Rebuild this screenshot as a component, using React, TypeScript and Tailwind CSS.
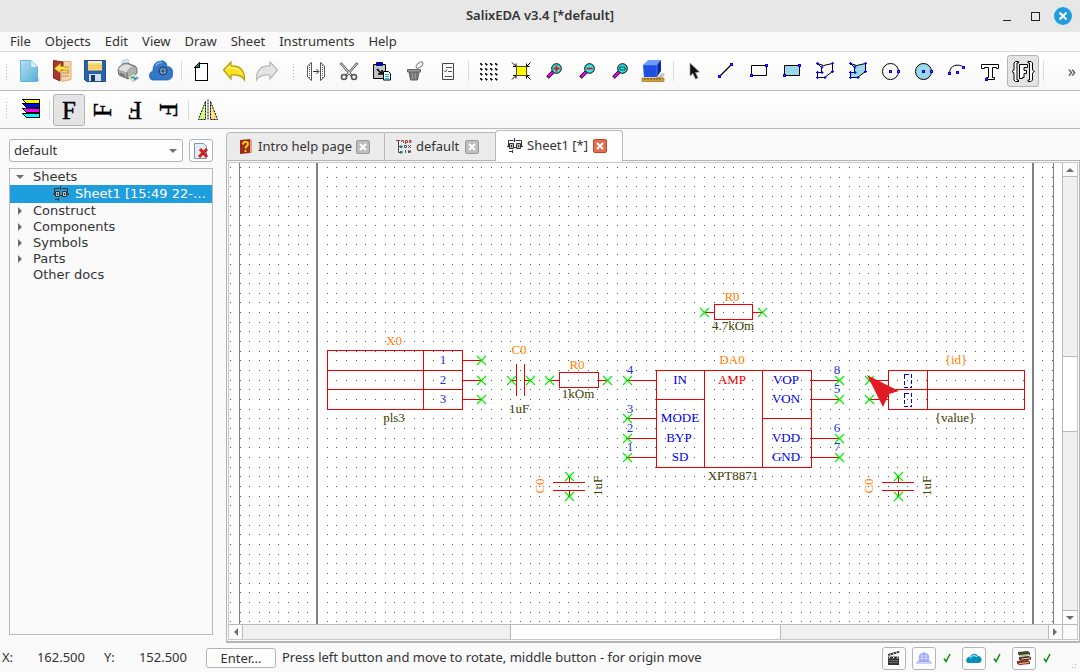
import React from "react";

type IconProps = { children: React.ReactNode; crisp?: boolean };

const Icon = ({ children, crisp }: IconProps) => (
  <svg
    width="24"
    height="24"
    viewBox="0 0 24 24"
    fill="none"
    shapeRendering={crisp ? "crispEdges" : "auto"}
    aria-hidden="true"
  >
    {children}
  </svg>
);

const Node = ({ x, y }: { x: number; y: number }) => (
  <g>
    <rect x={x - 1.5} y={y - 1.5} width="3" height="3" fill="#0000ff" />
    <rect x={x - 0.5} y={y - 0.5} width="1" height="1" fill="#c02080" />
  </g>
);

const Letter = ({ angle }: { angle: number }) => (
  <Icon>
    <text
      x="12"
      y="20.5"
      fontSize="25"
      textAnchor="middle"
      fontFamily="Liberation Serif, serif"
      fill="#000"
      stroke="#000"
      strokeWidth="0.4"
      transform={`rotate(${angle} 12 12)`}
    >
      F
    </text>
  </Icon>
);

const Magnifier = ({ children }: { children: React.ReactNode }) => (
  <Icon>
    <path d="M11 13 5.5 18.5" stroke="#000" strokeWidth="3.6" />
    <path d="M11 13 6 18" stroke="#f0f" strokeWidth="2" />
    <circle cx="14.5" cy="9.5" r="4.8" fill="#2ee6e6" stroke="#000" />
    {children}
  </Icon>
);

const POLY = "M4.5 4.5 8.5 8.5V13.5H4.5V18.5H11.5L19.5 12.5V4.5L10.5 6.5Z";
const POLY_NODES = [
  [4.5, 4.5],
  [9, 8],
  [9, 13.5],
  [4.5, 13.5],
  [4.5, 18.5],
  [12, 18.5],
  [19.5, 12.5],
  [19.5, 4.5],
];

const Polygon = ({ fill }: { fill: string }) => (
  <Icon>
    <path d={POLY} fill={fill} stroke="#000" />
    {POLY_NODES.map(([x, y]) => (
      <path
        key={`${x}-${y}`}
        d={`M${x - 1.5} ${y}h3M${x} ${y - 1.5}v3`}
        stroke="#0000ff"
        strokeWidth="1.2"
      />
    ))}
  </Icon>
);

const icons = {
  create: (
    <Icon>
      <defs>
        <linearGradient id="page" x1="0" y1="0" x2="1" y2="1">
          <stop offset="0" stopColor="#b5e0f3" />
          <stop offset="1" stopColor="#55aed6" />
        </linearGradient>
      </defs>
      <path d="M17 22h6l-2-4z" fill="#c9d2d6" />
      <path d="M3.500 1.500H14L20.500 8v14.500H3.500z" fill="url(#page)" stroke="#69b4d6" />
      <path d="M14 1.500V8h6.500z" fill="#e3f4fb" stroke="#8cc7e0" strokeWidth=".6" />
    </Icon>
  ),
  open: (
    <Icon>
      <path d="M10 2.500h11v18l-9 2z" fill="#f5d5a4" stroke="#d7b07b" />
      <path d="M12 8h7M12 11h7M12 14h7M12 17h7" stroke="#d08b4e" />
      <path d="M3.500 1.500 13 3v8h-3v11l-6.500-3z" fill="#a83a32" stroke="#86231f" />
      <path d="m4.500 9.500 6-5v3c5-.5 8 2 8 6-2-2.500-4-3-8-2.500v3z" fill="#ffe84a" stroke="#c79a14" strokeWidth=".7" />
    </Icon>
  ),
  save: (
    <Icon>
      <path d="M1.500 1.500h21v21h-19l-2-2z" fill="#2763a8" stroke="#244f86" />
      <path d="M5 2h14v9.500H5z" fill="#ffdc78" />
      <path d="M5 2h14v2H5z" fill="#f5f0d6" />
      <path d="M5 6.500h14M5 9h14" stroke="#eebf4d" />
      <path d="M6 15h12v7H6z" fill="#cfe0ea" />
      <path d="M8 16h4v6H8z" fill="#193c67" />
    </Icon>
  ),
  print: (
    <Icon>
      <path d="m6 2 6-2 1 6-6 3z" fill="#d9eaf8" stroke="#96b6d2" strokeWidth=".7" />
      <path d="M2 11C3 7 7 4 11 4l8 3c2 1 2 3 2 7l-9 6-9-4z" fill="#b0b0b0" stroke="#6e6e6e" />
      <path d="M2 11c2-4 5-6 9-6l8 3c-4 0-7 2-8 6z" fill="#dedede" stroke="#898989" strokeWidth=".6" />
      <path d="M11 14v6" stroke="#606060" />
      <path d="m4 13.500 5 2.500v3l-5-2.500z" fill="#777" />
      <path d="m12 18 6-3 5 4-6 4z" fill="#e8efe9" stroke="#9aaeb0" strokeWidth=".6" />
      <path d="m14 18 4-1 1 2-3 1z" fill="#59b044" />
      <path d="m18 19 3-1 1 1-4 3z" fill="#487ed8" />
    </Icon>
  ),
  cloud: (
    <Icon>
      <path
        d="M3 21C-1 19 0 13 4 12 4 6 7 2 11 2.500c3-2 7 1 7 5 4 0 6 3 5.500 6C24 18 22 21 18 21z"
        fill="#3478c9"
        stroke="#235ea8"
        strokeWidth=".8"
      />
      <path d="M7 7c1-3 4-4 6-3" stroke="#79ace5" strokeWidth="1.500" />
      <circle cx="14" cy="12" r="3.800" stroke="#2b4a6e" strokeWidth="1.600" fill="#86aed8" />
      <circle cx="14" cy="12" r="1.400" fill="#1a3352" />
      <path d="M14 9v6M11 12h6" stroke="#3d648f" strokeWidth=".8" />
    </Icon>
  ),
  sheet: (
    <Icon crisp>
      <path d="M10 4h8v17H6V8z" fill="#fff" stroke="#000" />
      <path d="m6 8 4-4v4z" fill="#008080" stroke="#000" />
    </Icon>
  ),
  undo: (
    <Icon>
      <path
        d="M1.500 11 9 3v4c8-.5 14 3 13.500 14-2.500-4.500-7-5.500-13.500-5v4z"
        fill="#f8e11d"
        stroke="#b99a0b"
        strokeWidth="1.200"
      />
      <path d="m4 11 4-4v2c6 0 10 2 12 6" stroke="#fff7a3" />
    </Icon>
  ),
  redo: (
    <Icon>
      <path
        d="M22.500 11 15 3v4C7 6.500 1 10 1.500 21 4 16.500 8.500 15.500 15 16v4z"
        fill="#e4e4e4"
        stroke="#b8b8b8"
        strokeWidth="1.200"
      />
    </Icon>
  ),
  mirrorGap: (
    <Icon>
      <path
        d="M7.500 3.500v18M7.500 3.500 3.500 7v11l4 3.500M16.500 3.500v18M16.500 3.500l4 3.500v11l-4 3.500"
        stroke="#555"
      />
      <path d="M5.500 6v13M18.500 6v13" stroke="#666" strokeDasharray="1 1" />
      <path d="M9 12.500h5.500M12.500 10l2.500 2.500-2.500 2.500" stroke="#333" />
    </Icon>
  ),
  cut: (
    <Icon>
      <path d="M3.500 4 15 17M20.500 4 9 17" stroke="#555" strokeWidth="2.600" />
      <path d="M4 4.500 14 16M20 4.500 10 16" stroke="#f4f4f4" strokeWidth="1" />
      <circle cx="7" cy="18" r="2.500" stroke="#555" strokeWidth="1.600" />
      <circle cx="17" cy="18" r="2.500" stroke="#555" strokeWidth="1.600" />
    </Icon>
  ),
  paste: (
    <Icon>
      <path d="M3.500 5.500h12v14h-12z" fill="#c4c4c4" stroke="#000" />
      <path d="M6.500 3.500h6v3h-6z" fill="#00009a" stroke="#00009a" />
      <path d="m7 10 5 5m0-4v4H8" stroke="#000" strokeWidth="1.600" />
      <path d="M13.500 12.500h5l2 2v6.500h-7z" fill="#fff" stroke="#000" />
      <path d="M15 15.500h4M15 17.500h4M15 19.500h4" stroke="#00c8d8" />
    </Icon>
  ),
  trash: (
    <Icon>
      <path d="m6 13 1.500 8h7l1.500-8z" fill="#777" stroke="#666" />
      <path d="M4.500 10.500h13v2.500h-13z" fill="#999" stroke="#666" />
      <ellipse cx="16.500" cy="6" rx="4" ry="2" stroke="#777" transform="rotate(-40 16.500 6)" />
      <path d="M9.500 14v6M12.500 14v6" stroke="#999" />
    </Icon>
  ),
  checklist: (
    <Icon>
      <path d="M6.500 4.500h11v16h-11z" stroke="#444" />
      <path d="M10 8.500h6M12 12.500h4M9 17.500h7M8 11.500l1.500 1.500 1.500-2.500" stroke="#555" />
    </Icon>
  ),
  grid: (
    <Icon crisp>
      {[4, 9, 14, 19].map((y) =>
        [4, 9, 14, 19].map((x) => (
          <path key={`${x}-${y}`} d={`M${x} ${y}h1v1h1v1h-1v-1h-1z`} fill="#000" stroke="#000" strokeWidth=".6" />
        )),
      )}
    </Icon>
  ),
  fit: (
    <Icon>
      <path
        d="M3 3.500l4 4m0-3v3H4M21.500 3.500l-4 4m0-3v3h3M3 20.500l4-4m0 3v-3H4M21.500 20.500l-4-4m0 3v-3h3"
        stroke="#000"
      />
      <path d="M7.500 7.500h10v9h-10z" fill="#ff0" stroke="#5a4500" />
    </Icon>
  ),
  zoomIn: (
    <Magnifier>
      <path d="M11.500 9.500h6M14.500 6.500v6" stroke="#f00" strokeWidth="1.600" />
    </Magnifier>
  ),
  zoomOut: (
    <Magnifier>
      <path d="M11.500 9.500h6" stroke="#f00" strokeWidth="1.600" />
    </Magnifier>
  ),
  zoomFit: (
    <Magnifier>
      <path d="M12 8h5v3h-5z" stroke="#004848" />
    </Magnifier>
  ),
  cube: (
    <Icon>
      <path d="m18 17 3-3 3 1-3 4h-6z" fill="#9a9a9a" opacity=".6" />
      <path d="m2 6 5-5h13l-3 5z" fill="#6f9cff" />
      <path d="M2 6h14v12H3z" fill="#1f4fe0" />
      <path d="m16 6 4-5v11l-4 6z" fill="#0a2aa5" />
      <path d="M2 6h14v12" stroke="#6d97f6" strokeWidth=".6" />
      <path d="M1 19h22v3.500H1z" fill="#d8a030" stroke="#8a6310" strokeWidth=".6" />
      <path d="M4 19v2M7 19v2M10 19v2M13 19v2M16 19v2M19 19v2" stroke="#5c4006" strokeWidth=".8" />
    </Icon>
  ),
  pointer: (
    <Icon>
      <path d="m9 4 9.500 9-4 .5 2.500 5.500-2.500 1-2.500-5.500L9 17z" fill="#111" stroke="#999" strokeWidth=".7" />
    </Icon>
  ),
  line: (
    <Icon>
      <path d="m5.500 17.500 12-12" stroke="#000" strokeWidth="1.200" />
      <Node x={5.5} y={17.5} />
      <Node x={17.5} y={5.5} />
    </Icon>
  ),
  rect: (
    <Icon>
      <path d="M4.500 6.500h15v10h-15z" stroke="#000" />
      <Node x={4.5} y={16.5} />
      <Node x={19.5} y={6.5} />
    </Icon>
  ),
  rectFill: (
    <Icon>
      <path d="M4.500 6.500h15v10h-15z" fill="#99d9ea" stroke="#000" />
      <Node x={4.5} y={16.5} />
      <Node x={19.5} y={6.5} />
    </Icon>
  ),
  poly: <Polygon fill="none" />,
  polyFill: <Polygon fill="#99d9ea" />,
  circle: (
    <Icon>
      <circle cx="11.500" cy="12.500" r="8" stroke="#000" />
      <Node x={11.5} y={12.5} />
      <Node x={19.5} y={12.5} />
    </Icon>
  ),
  circleFill: (
    <Icon>
      <circle cx="11.500" cy="12.500" r="8" fill="#99d9ea" stroke="#000" />
      <Node x={11.5} y={12.5} />
      <Node x={19.5} y={12.5} />
    </Icon>
  ),
  arc: (
    <Icon>
      <path d="M4.500 14.500c0-9 9-10 14-6.500" stroke="#000" />
      <Node x={4.5} y={14.5} />
      <Node x={12.5} y={13.5} />
      <Node x={18.5} y={8.5} />
    </Icon>
  ),
  text: (
    <Icon>
      <path d="M3.500 5.500h17v4h-2v-1h-4v10h2v2h-8v-2h2v-10h-4v1h-3z" fill="#fff" stroke="#000" />
      <Node x={8.5} y={20.5} />
    </Icon>
  ),
  param: (
    <Icon>
      <path
        d="M7.500 2.500h-3l-1.500 1.500v7L1 12.500 3 14v7l1.500 1.500h3v-1.500H6v-17h1.500zM17 2.500h3l1.500 1.500v7l2 1.500-2 1.500v7L20 22.500h-3v-1.500h1.500v-17H17z"
        fill="#fff"
        stroke="#000"
      />
      <path d="M8.500 5.500h8v3h-3.500v3h2.500v3H13v4h-1.500v1h-3z" fill="#fff" stroke="#000" />
    </Icon>
  ),
  layers: (
    <Icon crisp>
      {[
        ["#ff0", 0],
        ["#00f", 4],
        ["#f0f", 9],
        ["#0ff", 14],
      ].map(([color, y]) => (
        <path
          key={color}
          d={`M5 ${Number(y) + 1}H22V${Number(y) + 5}H9Z`}
          fill={String(color)}
          stroke="#000"
        />
      ))}
    </Icon>
  ),
  flip: (
    <Icon>
      <path d="M9.500 3.500V21.500h-7z" fill="#d5fb7c" stroke="#000" strokeDasharray="2 1" />
      <path d="M14.500 3.500V21.500h7z" fill="#ffe27e" stroke="#000" strokeDasharray="2 1" />
      <path d="M12 1.500v21" stroke="#000" strokeDasharray="2 1" />
    </Icon>
  ),
};

const SchemeIcon = () => (
  <svg width="16" height="16" viewBox="0 0 16 16" fill="none" stroke="#333" aria-hidden="true">
    <path d="M1.500 9V2.500H6.500M8.500 2.500h6V9M7.500 0v4M6 9.500h4M2 13.500h4M5.500 12v3" />
    <path d="M2.500 5.500h4v5h-4zM9.500 5.500h4v5h-4z" fill="#bbb" />
    <path d="M0 8.500h2M14 8.500h2M4.500 7v2M11.500 7v2" />
  </svg>
);

const BookIcon = () => (
  <svg width="16" height="16" viewBox="0 0 16 16" aria-hidden="true">
    <path d="M2 1 12 0v14L2 15z" fill="#9f2a20" />
    <path d="M12 0l2 1v13l-2 0z" fill="#d9a58c" />
    <path d="M5 5.500C5 2 10 2 10 5c0 2-2.500 2-2.500 4.500M7.500 11v2" stroke="#ffe000" strokeWidth="1.800" fill="none" />
  </svg>
);

const TreeIcon = () => (
  <svg width="16" height="16" viewBox="0 0 16 16" fill="none" aria-hidden="true">
    <path d="M2.500 2v11.500H6M2.500 7.500H6" stroke="#444" />
    <path d="M0 1.500h4M5.500 3V1.500h2V4M9.500 5V1.500h2v2h-2M13.500 1.500h1.500v2h-1.500z" stroke="#a33b3b" />
    <path d="M8.500 6.500h2v2h-2zM12 6l3 3m0-3-3 3M9.500 11v3M12.500 14v-2.500h1v2h1v-2" stroke="#555" />
    <path d="M4 6.500h2.500v2.500H4zM4 12h2.500v2.500H4z" fill="#178080" />
  </svg>
);

type Tool = { icon: React.ReactNode; label: string; active?: boolean } | null;

const fileTools: Tool[] = [
  { icon: icons.create, label: "New" },
  { icon: icons.open, label: "Open" },
  { icon: icons.save, label: "Save" },
  { icon: icons.print, label: "Print" },
  { icon: icons.cloud, label: "Cloud" },
  null,
  { icon: icons.sheet, label: "Sheet" },
  { icon: icons.undo, label: "Undo" },
  { icon: icons.redo, label: "Redo" },
];

const drawTools: Tool[] = [
  { icon: icons.mirrorGap, label: "Move" },
  { icon: icons.cut, label: "Cut" },
  { icon: icons.paste, label: "Paste" },
  { icon: icons.trash, label: "Delete" },
  { icon: icons.checklist, label: "Properties" },
  null,
  { icon: icons.grid, label: "Grid" },
  { icon: icons.fit, label: "Fit" },
  { icon: icons.zoomIn, label: "Zoom in" },
  { icon: icons.zoomOut, label: "Zoom out" },
  { icon: icons.zoomFit, label: "Zoom window" },
  { icon: icons.cube, label: "3D view" },
  null,
  { icon: icons.pointer, label: "Select" },
  { icon: icons.line, label: "Line" },
  { icon: icons.rect, label: "Rectangle" },
  { icon: icons.rectFill, label: "Filled rectangle" },
  { icon: icons.poly, label: "Polygon" },
  { icon: icons.polyFill, label: "Filled polygon" },
  { icon: icons.circle, label: "Circle" },
  { icon: icons.circleFill, label: "Filled circle" },
  { icon: icons.arc, label: "Arc" },
  { icon: icons.text, label: "Text" },
  { icon: icons.param, label: "Parameter text", active: true },
  null,
];

const textTools: Tool[] = [
  { icon: icons.layers, label: "Layers" },
  null,
  { icon: <Letter angle={0} />, label: "Text 0", active: true },
  { icon: <Letter angle={-90} />, label: "Text 90" },
  { icon: <Letter angle={180} />, label: "Text 180" },
  { icon: <Letter angle={90} />, label: "Text 270" },
  null,
  { icon: icons.flip, label: "Mirror" },
];

const Toolbar = ({ tools }: { tools: Tool[] }) => (
  <div className="flex shrink-0 items-center gap-px pl-[5px] pr-1">
    <div className="mr-[3px] h-[17px] w-1 bg-[radial-gradient(#b4b4b4_1px,transparent_1px)] bg-[length:3px_3px]" />
    {tools.map((tool, i) =>
      tool ? (
        <button
          key={tool.label}
          aria-label={tool.label}
          className={
            tool.active
              ? "flex size-8 items-center justify-center rounded-[3px] border border-[#b4b4b4] bg-[#e4e4e4]"
              : "flex size-8 items-center justify-center"
          }
        >
          {tool.icon}
        </button>
      ) : (
        <div key={i} className="flex h-5 w-1.5 justify-center">
          <div className="w-px bg-[#dcdcdc]" />
        </div>
      ),
    )}
  </div>
);

const menus = ["File", "Objects", "Edit", "View", "Draw", "Sheet", "Instruments", "Help"];

const TitleBar = () => (
  <header className="grid h-8 shrink-0 grid-cols-[1fr_auto_1fr] items-center bg-[#e7e7e7]">
    <h1 className="col-start-2 text-[13px] font-semibold text-[#333]">SalixEDA v3.4 [*default]</h1>
    <div className="flex items-center justify-end gap-[18px] pr-2">
      <button aria-label="Minimize" className="flex size-[10px] items-end">
        <span className="h-px w-2 bg-[#222]" />
      </button>
      <button aria-label="Maximize" className="size-[9px] border border-[#222]" />
      <button aria-label="Close" className="-ml-1 flex size-[18px] items-center justify-center rounded-full bg-[#1f9ede]">
        <svg width="8" height="8" viewBox="0 0 8 8" stroke="#fff" strokeWidth="2">
          <path d="m.5.5 7 7m0-7-7 7" />
        </svg>
      </button>
    </div>
  </header>
);

const Arrow = ({ dir }: { dir: "up" | "down" | "left" | "right" }) => {
  const d = {
    up: "M0 6h8L4 2z",
    down: "M0 2h8L4 6z",
    left: "M6 0v8L2 4z",
    right: "M2 0v8l4-4z",
  }[dir];
  return (
    <svg width="8" height="8" viewBox="0 0 8 8" fill="#6e6e6e" aria-hidden="true">
      <path d={d} />
    </svg>
  );
};

const Sidebar = () => (
  <aside className="flex w-[213px] shrink-0 flex-col pl-[9px] pt-[10px]">
    <div className="flex gap-1.5">
      <div className="relative flex-1">
        <select
          aria-label="Library"
          className="block h-[23px] w-full appearance-none rounded-[3px] border border-[#b4b4b4] bg-[#fdfdfd] pl-1 text-[13px] text-[#333]"
        >
          <option>default</option>
        </select>
        <span className="pointer-events-none absolute inset-y-0 right-1.5 flex items-center">
          <Arrow dir="down" />
        </span>
      </div>
      <button
        aria-label="Remove"
        className="flex h-[23px] w-6 items-center justify-center rounded-[3px] border border-[#b4b4b4] bg-[#fdfdfd]"
      >
        <svg width="18" height="18" viewBox="0 0 18 18" fill="none">
          <path d="M2.500 1.500h9l3 3v12h-12z" fill="#e3ecf4" stroke="#8295a8" />
          <path d="m8 7 7 8m0-8-8 8" stroke="#cf1f1f" strokeWidth="3" />
        </svg>
      </button>
    </div>
    <ul className="mb-2 mt-1.5 min-h-0 flex-1 border border-[#b9b9b9] font-['DejaVu_Sans'] text-[13px] leading-4 text-[#333]">
      <li className="flex h-4 items-center gap-[9px] pl-1.5">
        <Arrow dir="down" />
        Sheets
      </li>
      <li className="flex h-[18px] items-center gap-1 bg-[#1f9ede] pl-[43px] text-white">
        <SchemeIcon />
        <span className="whitespace-nowrap pl-0.5">Sheet1 [15:49 22-…</span>
      </li>
      {["Construct", "Components", "Symbols", "Parts"].map((name) => (
        <li key={name} className="flex h-4 items-center gap-[9px] pl-1.5">
          <Arrow dir="right" />
          {name}
        </li>
      ))}
      <li className="h-4 pl-[23px]">Other docs</li>
    </ul>
  </aside>
);

const CloseBox = ({ active, label }: { active?: boolean; label: string }) => (
  <button
    aria-label={label}
    className={
      active
        ? "flex size-[14px] shrink-0 items-center justify-center rounded-xs border border-[#c2452a] bg-[#e5704f]"
        : "flex size-[14px] shrink-0 items-center justify-center rounded-xs border border-[#999] bg-[#bdbdbd]"
    }
  >
    <svg width="8" height="8" viewBox="0 0 8 8" stroke="#fff" strokeWidth="2">
      <path d="m1 1 6 6m0-6-6 6" />
    </svg>
  </button>
);

const Tabs = () => (
  <div className="-mb-px flex items-end text-[13px] text-[#333]">
    <div className="flex h-[29px] w-[159px] items-center gap-1 rounded-tl border border-[#b9b9b9] bg-[#ebebeb] pl-[11px]">
      <BookIcon />
      <span className="w-[94px] whitespace-nowrap">Intro help page</span>
      <CloseBox label="Close Intro help page" />
    </div>
    <div className="flex h-[29px] w-[110px] items-center gap-1 border-y border-[#b9b9b9] bg-[#ebebeb] pl-[11px]">
      <TreeIcon />
      <span className="w-[45px]">default</span>
      <CloseBox label="Close default" />
    </div>
    <div className="relative flex h-[31px] w-32 items-center gap-1 rounded-t border border-b-0 border-[#b9b9b9] bg-white pl-[11px]">
      <SchemeIcon />
      <span className="w-[62px]">Sheet1 [*]</span>
      <CloseBox active label="Close Sheet1" />
    </div>
  </div>
);

// Schematic geometry is kept in window units, the view scrolls it into place.
const VIEW = { x: 229, y: 163 };
const STEP = 9.67;

const range = (n: number) => Array.from({ length: n }, (_, i) => i);

const crosses = [
  [481, 360], [481, 380], [481, 399],
  [511, 380], [530, 380],
  [549, 380], [607, 380],
  [569, 476], [569, 496],
  [704, 312], [762, 312],
  [627, 380], [627, 418], [627, 438], [627, 457],
  [839, 380], [839, 399], [839, 438], [839, 457],
  [869, 380], [869, 399],
  [898, 476], [898, 496],
];

const ORANGE = "#ff8000";
const OLIVE = "#404000";
const BLUE = "#0000e6";
const PIN = "#1a33e6";

const labels: [string, number, number, string][] = [
  ["X0", 394, 345, ORANGE],
  ["pls3", 394, 422, OLIVE],
  ["1", 443, 364, PIN],
  ["2", 443, 384, PIN],
  ["3", 443, 403, PIN],
  ["C0", 519, 354, ORANGE],
  ["1uF", 519, 413, OLIVE],
  ["R0", 577, 369, ORANGE],
  ["1kOm", 578, 398, OLIVE],
  ["R0", 732, 301, ORANGE],
  ["4.7kOm", 733, 330, OLIVE],
  ["DA0", 732, 364, ORANGE],
  ["XPT8871", 733, 480, OLIVE],
  ["AMP", 732, 384, "#e60000"],
  ["IN", 680, 384, BLUE],
  ["MODE", 680, 422, BLUE],
  ["BYP", 679, 442, BLUE],
  ["SD", 680, 461, BLUE],
  ["VOP", 786, 384, BLUE],
  ["VON", 786, 403, BLUE],
  ["VDD", 786, 442, BLUE],
  ["GND", 786, 461, BLUE],
  ["4", 630, 374, PIN],
  ["3", 630, 413, PIN],
  ["2", 630, 432, PIN],
  ["1", 630, 451, PIN],
  ["8", 837, 374, PIN],
  ["5", 837, 393, PIN],
  ["6", 837, 432, PIN],
  ["7", 837, 451, PIN],
  ["{id}", 956, 364, ORANGE],
  ["{value}", 955, 422, OLIVE],
];

const turned: [string, number, number, string][] = [
  ["C0", 544, 486, ORANGE],
  ["1uF", 602, 486, OLIVE],
  ["C0", 873, 486, ORANGE],
  ["1uF", 931, 486, OLIVE],
];

const Schematic = () => (
  <svg className="block h-full w-full bg-white" role="img" aria-label="Sheet1">
    <g transform={`translate(${-VIEW.x} ${-VIEW.y})`}>
      <g shapeRendering="crispEdges" fill="none">
        <path
          fill="#555"
          d={range(48)
            .map((r) =>
              range(87)
                .map((c) => `M${Math.round(230 + c * STEP)} ${Math.round(167 + r * STEP)}h1v1h-1z`)
                .join(""),
            )
            .join("")}
        />
        <path stroke="#808080" d="M239.500 160V640M1053.500 160V640" />
        <path stroke="#808080" strokeWidth="2" d="M317 160V640M1033 160V640" />
        <g stroke="#f00000">
          <path d="M327.500 350.500h135v59h-135zM423.500 350V409M327 370.500H462M327 389.500H462M462 360.500H481M462 380.500H481M462 399.500H481" />
          <path d="M516.500 364V396M524.500 364V396M511 380.500H516M525 380.500H530" />
          <path d="M559.500 372.500h39v15h-39zM549 380.500H559M599 380.500H607" />
          <path d="M553 482.500H585M553 490.500H585M569.500 476V482M569.500 491V496" />
          <path d="M882 482.500H914M882 490.500H914M898.500 476V482M898.500 491V496" />
          <path d="M714.500 304.500h38v15h-38zM704 312.500H714M753 312.500H762" />
          <path d="M656.500 370.500h155v97h-155zM704.500 370V467M762.500 370V467M656 399.500H704M762 418.500H811" />
          <path d="M627 380.500H656M627 418.500H656M627 438.500H656M627 457.500H656" />
          <path d="M812 380.500H839M812 399.500H839M812 438.500H839M812 457.500H839" />
          <path d="M888.500 370.500h136v39h-136zM927.500 370V409M888 389.500H1024M869 380.500H888M869 399.500H888" />
        </g>
        <path stroke="#0000e6" strokeDasharray="4 2" d="M904.500 374.500h7v13h-7zM904.500 393.500h7v13h-7z" />
      </g>
      {crosses.map(([x, y]) => (
        <path
          key={`${x}-${y}`}
          d={`M${x - 4} ${y - 4}l9 9m0-9-9 9`}
          stroke="#00f000"
          strokeWidth="1.200"
        />
      ))}
      <g fontFamily="Liberation Serif, serif" fontSize="13" textAnchor="middle">
        {labels.map(([text, x, y, color]) => (
          <text key={`${x}-${y}`} x={x} y={y} fill={color}>
            {text}
          </text>
        ))}
        {turned.map(([text, x, y, color]) => (
          <text key={`${x}-${y}`} transform={`translate(${x} ${y}) rotate(-90)`} fill={color}>
            {text}
          </text>
        ))}
      </g>
      <path d="M867 375 899 391 889 394 883 407Z" fill="#e01b24" />
    </g>
  </svg>
);

const Workspace = () => (
  <div className="min-h-0 flex-1 border border-b-2 border-[#b4b4b4] p-px">
    <div className="grid h-full grid-cols-[1fr_15px] grid-rows-[1fr_15px] border border-[#c8c8c8]">
      <div className="min-h-0 min-w-0 overflow-hidden">
        <Schematic />
      </div>
      <div className="flex min-h-0 flex-col border-l border-[#b9b9b9] bg-[#f0f0f0]">
        <button aria-label="Scroll up" className="flex h-[14px] shrink-0 items-center justify-center border-b border-[#b9b9b9] bg-[#fcfcfc]">
          <Arrow dir="up" />
        </button>
        <div className="flex-[181]" />
        <div className="flex-[75] border-y border-[#b9b9b9] bg-white" />
        <div className="flex-[180]" />
        <button aria-label="Scroll down" className="flex h-[14px] shrink-0 items-center justify-center border-t border-[#b9b9b9] bg-[#fcfcfc]">
          <Arrow dir="down" />
        </button>
      </div>
      <div className="flex border-t border-[#b9b9b9] bg-[#f0f0f0]">
        <button aria-label="Scroll left" className="flex w-[14px] shrink-0 items-center justify-center border-r border-[#b9b9b9] bg-[#fcfcfc]">
          <Arrow dir="left" />
        </button>
        <div className="flex-[268]" />
        <div className="flex-[269] border-x border-[#b9b9b9] bg-white" />
        <div className="flex-[268]" />
        <button aria-label="Scroll right" className="flex w-[14px] shrink-0 items-center justify-center border-l border-[#b9b9b9] bg-[#fcfcfc]">
          <Arrow dir="right" />
        </button>
      </div>
      <div className="border-l border-t border-[#b9b9b9] bg-[#fafafa]" />
    </div>
  </div>
);

const StatusButton = ({ label, children }: { label: string; children: React.ReactNode }) => (
  <button
    aria-label={label}
    className="flex h-[23px] w-6 items-center justify-center rounded-[3px] border border-[#b4b4b4] bg-[#fdfdfd]"
  >
    <svg width="16" height="16" viewBox="0 0 16 16" fill="none">
      {children}
    </svg>
  </button>
);

const Check = () => (
  <svg width="26" height="10" viewBox="0 0 26 10" fill="none" aria-hidden="true">
    <path d="m8 5.500 2 3 4-7.500" stroke="#0a8a14" strokeWidth="1.500" />
  </svg>
);

const StatusBar = () => (
  <footer className="flex h-[29px] shrink-0 items-center pl-0.5 pt-px text-[13px] text-[#333]">
    <span className="w-8">X:</span>
    <span className="w-[51px] text-right">162.500</span>
    <span className="w-9 pl-[19px]">Y:</span>
    <span className="w-[66px] text-right">152.500</span>
    <button className="ml-[19px] h-5 w-[70px] rounded-[3px] border border-[#b4b4b4] bg-[#fdfdfd] leading-4">
      Enter...
    </button>
    <span className="pl-1.5">Press left button and move to rotate, middle button - for origin move</span>
    <div className="ml-auto flex items-center">
      <StatusButton label="Record">
        <path d="M2 6.500h11V15H2z" fill="#333" />
        <path d="M2 4 13 1l.5 1.500L2.500 6z" fill="#222" />
        <path d="m4 4 1 1.500M7 3l1 1.500M10 2l1 1.500M4 6.500l-1 2M8 6.500l-1 2M12 6.500l-1 2" stroke="#eee" />
        <path d="M3 10.500h9M3 12.500h9" stroke="#888" strokeWidth=".7" />
      </StatusButton>
      <div className="w-1.5" />
      <StatusButton label="Help">
        <path d="M3 11C2 5 4 3 8 2.500 12 3 14 5 13 11l2.500 1v1.500H.5V12z" fill="#9aa2f6" />
        <path d="M4 6h8M3 8.500h10M6 3v8M10 3v8M2 12.500h12" stroke="#dfe2ff" strokeWidth=".8" />
      </StatusButton>
      <Check />
      <StatusButton label="Cloud">
        <path d="M2 13C-1 12 0 7 4 6.500 6 3 10 3 12 6c4 0 5 6 1 7z" fill="#078fb5" />
        <path d="M4 8c2-3 5-3 7-1" stroke="#7de1f6" strokeWidth="1.500" />
      </StatusButton>
      <Check />
      <StatusButton label="Library">
        <path d="m2 2 10-1 2 2v2L4 6 2 4z" fill="#3b4630" />
        <path d="m3 7 9-1 3 1v2.500L5 11 3 9.500z" fill="#4b3324" />
        <path d="m1 11 11-1 2 2v2L3 15l-2-1.500z" fill="#8b2722" />
        <path d="M4 5.500 13 4.500M5 9l9-1M3 13.500l10-1" stroke="#e6cf9d" />
      </StatusButton>
      <Check />
      <div className="ml-1.5 mr-0.5 size-[10px] self-end bg-[radial-gradient(#b4b4b4_1px,transparent_1px)] bg-[length:3px_3px] [clip-path:polygon(100%_0,100%_100%,0_100%)]" />
    </div>
  </footer>
);

export default function App() {
  return (
    <div className="flex h-screen flex-col overflow-hidden bg-[#fafafa] font-['Noto_Sans',sans-serif]">
      <TitleBar />
      <nav className="flex h-5 shrink-0 items-center gap-[14px] border-b border-[#dcdcdc] pl-2.5 text-[13px] text-[#333]">
        {menus.map((menu) => (
          <button key={menu}>{menu}</button>
        ))}
      </nav>
      <div className="flex h-[39px] shrink-0 items-center border-b border-[#b9b9b9] bg-linear-to-b from-white to-[#f8f8f8]">
        <Toolbar tools={fileTools} />
        <Toolbar tools={drawTools} />
        <button aria-label="More tools" className="ml-auto pr-1 text-base text-[#444]">
          »
        </button>
      </div>
      <div className="flex h-[38px] shrink-0 items-center border-b border-[#b9b9b9] bg-linear-to-b from-white to-[#f8f8f8]">
        <Toolbar tools={textTools} />
      </div>
      <div className="flex min-h-0 flex-1">
        <Sidebar />
        <main className="ml-[13px] flex min-w-0 flex-1 flex-col pt-px">
          <Tabs />
          <Workspace />
        </main>
      </div>
      <StatusBar />
    </div>
  );
}
